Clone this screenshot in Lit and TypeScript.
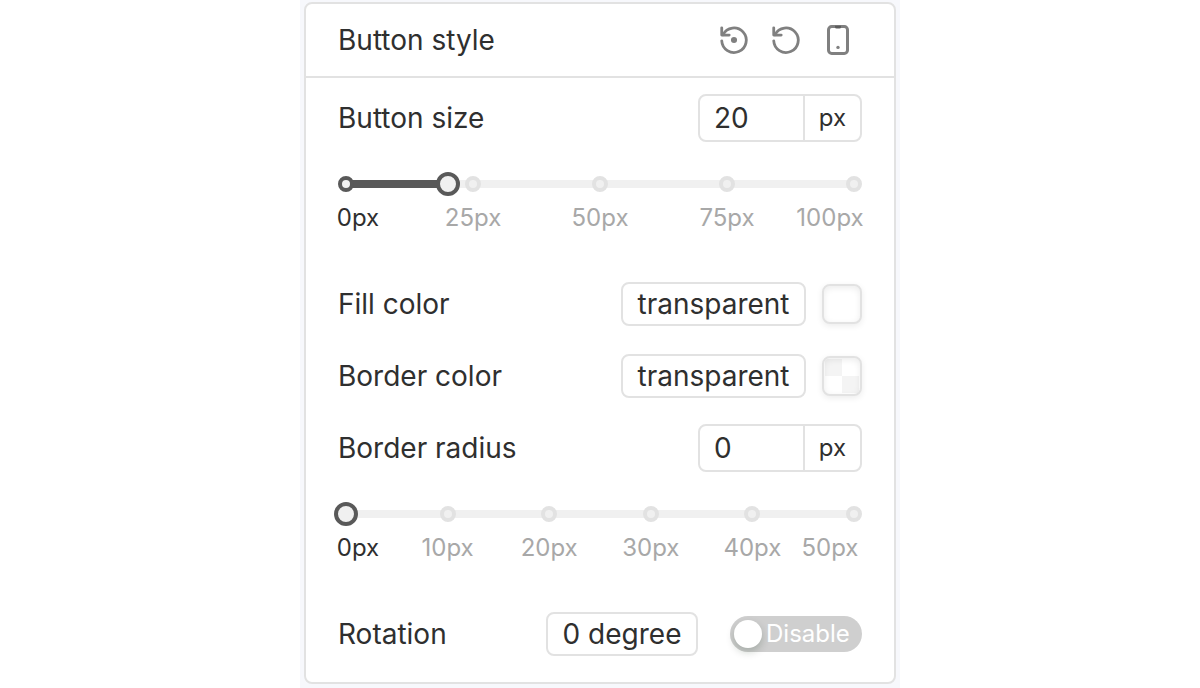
import { LitElement, html, css, svg, nothing } from "lit";
import { customElement, property, state } from "lit/decorators.js";
import { classMap } from "lit/directives/class-map.js";
import { styleMap } from "lit/directives/style-map.js";

@customElement("step-slider")
class StepSlider extends LitElement {
  @property({ type: Number }) value = 0;
  @property({ type: Number }) max = 100;
  @property({ type: Number }) step = 25;
  @property() name = "";

  static styles = css`
    :host {
      display: block;
      padding: 18px 0 36px;
    }
    .slider {
      display: grid;
      grid-template: 24px auto / minmax(0, 1fr);
    }
    .rail {
      grid-area: 1 / 1;
      align-self: center;
      height: 8px;
      margin: 0 8px;
      background: #f0f0f0;
    }
    .fill {
      height: 100%;
      background: #595959;
    }
    .ticks {
      grid-area: 1 / 1 / 3 / 2;
      display: flex;
      justify-content: space-between;
    }
    .tick {
      display: flex;
      flex-direction: column;
      align-items: center;
      gap: 12px;
      width: 16px;
      padding-top: 4px;
      color: #a8a8a8;
    }
    .tick:first-child {
      align-items: flex-start;
    }
    .tick:last-child {
      align-items: flex-end;
    }
    .tick.active {
      color: #2f2f2f;
    }
    .dot {
      box-sizing: border-box;
      width: 16px;
      height: 16px;
      border: 4px solid #e2e2e2;
      border-radius: 50%;
      background: #f0f0f0;
    }
    .active .dot {
      border-color: #595959;
    }
    .text {
      display: flex;
      justify-content: center;
      font-size: 24px;
      line-height: 28px;
      white-space: nowrap;
    }
    .tick:first-child .text {
      width: 40px;
    }
    .tick:last-child .text {
      width: 64px;
    }
    .range {
      grid-area: 1 / 1;
      appearance: none;
      height: 24px;
      margin: 0 -4px;
      background: transparent;
      cursor: pointer;
      z-index: 1;
    }
    .range::-webkit-slider-runnable-track {
      height: 24px;
      background: transparent;
    }
    .range::-webkit-slider-thumb {
      appearance: none;
      box-sizing: border-box;
      width: 24px;
      height: 24px;
      border: 4px solid #595959;
      border-radius: 50%;
      background: #f0f0f0;
    }
  `;

  render() {
    const marks: number[] = [];
    for (let m = 0; m <= this.max; m += this.step) marks.push(m);
    return html`
      <div class="slider">
        <div class="rail">
          <div class="fill" style=${styleMap({ width: `${(this.value / this.max) * 100}%` })}></div>
        </div>
        <div class="ticks">
          ${marks.map(
            (m) => html`<div class=${classMap({ tick: true, active: m <= this.value })}>
              <span class="dot"></span><span class="text">${m}px</span>
            </div>`
          )}
        </div>
        <input
          class="range"
          type="range"
          min="0"
          max=${this.max}
          .value=${String(this.value)}
          aria-label=${this.name}
          @input=${this.onInput}
        />
      </div>
    `;
  }

  private onInput(e: Event) {
    const value = Number((e.target as HTMLInputElement).value);
    this.dispatchEvent(new CustomEvent("value-change", { detail: value }));
  }
}

const resetArrow = svg`<path d="M2.8 12.6a9.2 9.2 0 1 0 1 -4.6" /><path d="M2.8 2.9v5.4h5.6" />`;

@customElement("app-root")
class AppRoot extends LitElement {
  @state() private size = 20;
  @state() private radius = 0;
  @state() private rotating = false;

  static styles = css`
    :host {
      display: block;
      min-height: 100vh;
      background: #fff;
      color: #2f2f2f;
      font-family: Inter, "Liberation Sans", sans-serif;
      font-size: 28px;
      line-height: 36px;
    }
    .stage {
      box-sizing: border-box;
      max-width: 600px;
      min-height: 100vh;
      margin: 0 auto;
      padding: 2px 4px 4px;
      background: #f7f8fc;
    }
    .panel {
      border: 2px solid #e2e2e2;
      border-radius: 8px;
      background: #fff;
    }
    .header {
      display: flex;
      align-items: center;
      justify-content: space-between;
      height: 72px;
      padding: 0 32px;
      border-bottom: 2px solid #e2e2e2;
    }
    .title {
      margin: 0;
      font: inherit;
    }
    .actions {
      display: flex;
      gap: 20px;
      padding-right: 8px;
    }
    .action {
      display: flex;
      padding: 0;
      border: 0;
      background: none;
      color: #808080;
      cursor: pointer;
    }
    .icon {
      width: 32px;
      height: 32px;
      fill: none;
      stroke: currentColor;
      stroke-width: 2.1;
      stroke-linecap: round;
      stroke-linejoin: round;
    }
    .case {
      stroke-width: 3;
    }
    .solid {
      fill: currentColor;
      stroke: none;
    }
    .notch {
      fill: #5c5c5c;
      stroke: none;
    }
    .body {
      padding: 4px 32px 12px;
    }
    .row {
      display: flex;
      align-items: center;
      justify-content: space-between;
      height: 72px;
    }
    .controls {
      display: flex;
      align-items: center;
      gap: 16px;
    }
    .controls.wide {
      gap: 32px;
    }
    .field,
    .number {
      box-sizing: border-box;
      border: 2px solid #e2e2e2;
      border-radius: 8px;
      background: #fff;
    }
    .field {
      height: 44px;
      padding: 0 14px;
      color: inherit;
      font: inherit;
      text-align: center;
    }
    .color {
      width: 185px;
    }
    .angle {
      width: 152px;
    }
    .number {
      display: flex;
      width: 164px;
      height: 48px;
    }
    .amount {
      flex: 1;
      min-width: 0;
      padding: 0 14px;
      border: 0;
      border-right: 2px solid #e2e2e2;
      background: none;
      color: inherit;
      font: inherit;
    }
    .unit {
      display: flex;
      align-items: center;
      padding: 0 14px;
      font-size: 24px;
    }
    .swatch {
      box-sizing: border-box;
      width: 40px;
      height: 40px;
      padding: 2px;
      border: 2px solid #e2e2e2;
      border-radius: 8px;
      background: #fff;
      box-shadow: 0 2px 6px rgba(0, 0, 0, 0.08), inset 0 2px 6px rgba(0, 0, 0, 0.08);
      cursor: pointer;
    }
    .checker {
      background: repeating-conic-gradient(#fff 0 25%, #f4f4f4 0 50%) center / 34px 34px
        padding-box no-repeat #fff;
    }
    .toggle {
      box-sizing: border-box;
      display: flex;
      align-items: center;
      gap: 4px;
      width: 132px;
      height: 36px;
      padding: 0 4px;
      border-radius: 18px;
      background: #cfcfcf;
      color: #fff;
      font-size: 24px;
      cursor: pointer;
    }
    .toggle.on {
      flex-direction: row-reverse;
      justify-content: space-between;
      background: #595959;
    }
    .knob {
      appearance: none;
      flex: none;
      width: 28px;
      height: 28px;
      margin: 0;
      border-radius: 50%;
      background: #fff;
      box-shadow: 0 4px 8px rgba(0, 35, 11, 0.2);
    }
  `;

  private icon(kind: string) {
    if (kind === "phone") {
      return html`<svg class="icon" viewBox="0 0 32 32" aria-hidden="true">
        <rect class="case" x="6.5" y="2.5" width="19" height="27" rx="3.2" />
        <path class="notch" d="M13 1.8h6v1.2a1.5 1.5 0 0 1-1.5 1.5h-3a1.5 1.5 0 0 1-1.5-1.5z" />
        <circle class="solid" cx="16" cy="23.4" r="1.7" />
      </svg>`;
    }
    return html`<svg class="icon" viewBox="0 0 24 24" aria-hidden="true">
      ${resetArrow}
      ${kind === "restore" ? svg`<circle class="solid" cx="12" cy="12" r="2.3" />` : nothing}
    </svg>`;
  }

  private numberField(id: string, value: number, set: (n: number) => void) {
    return html`<div class="number">
      <input
        class="amount"
        id=${id}
        inputmode="numeric"
        .value=${String(value)}
        @change=${(e: Event) => set(Number((e.target as HTMLInputElement).value) || 0)}
      />
      <span class="unit">px</span>
    </div>`;
  }

  private colorRow(id: string, label: string, checker: boolean) {
    return html`<div class="row">
      <label for=${id}>${label}</label>
      <div class="controls">
        <input class="field color" id=${id} value="transparent" />
        <button class=${classMap({ swatch: true, checker })} type="button" aria-label=${label}></button>
      </div>
    </div>`;
  }

  render() {
    return html`
      <main class="stage">
        <section class="panel">
          <header class="header">
            <h2 class="title">Button style</h2>
            <div class="actions">
              <button class="action" type="button" aria-label="Restore">${this.icon("restore")}</button>
              <button class="action" type="button" aria-label="Reset">${this.icon("reset")}</button>
              <button class="action" type="button" aria-label="Mobile">${this.icon("phone")}</button>
            </div>
          </header>
          <div class="body">
            <div class="row">
              <label for="size">Button size</label>
              ${this.numberField("size", this.size, (n) => (this.size = n))}
            </div>
            <step-slider
              name="Button size"
              .value=${this.size}
              .max=${100}
              .step=${25}
              @value-change=${(e: CustomEvent) => (this.size = e.detail)}
            ></step-slider>
            ${this.colorRow("fill", "Fill color", false)}
            ${this.colorRow("border", "Border color", true)}
            <div class="row">
              <label for="radius">Border radius</label>
              ${this.numberField("radius", this.radius, (n) => (this.radius = n))}
            </div>
            <step-slider
              name="Border radius"
              .value=${this.radius}
              .max=${50}
              .step=${10}
              @value-change=${(e: CustomEvent) => (this.radius = e.detail)}
            ></step-slider>
            <div class="row">
              <label for="angle">Rotation</label>
              <div class="controls wide">
                <input class="field angle" id="angle" value="0 degree" />
                <label class=${classMap({ toggle: true, on: this.rotating })}>
                  <input
                    class="knob"
                    type="checkbox"
                    role="switch"
                    .checked=${this.rotating}
                    @change=${() => (this.rotating = !this.rotating)}
                  />
                  <span>${this.rotating ? "Enable" : "Disable"}</span>
                </label>
              </div>
            </div>
          </div>
        </section>
      </main>
    `;
  }
}
